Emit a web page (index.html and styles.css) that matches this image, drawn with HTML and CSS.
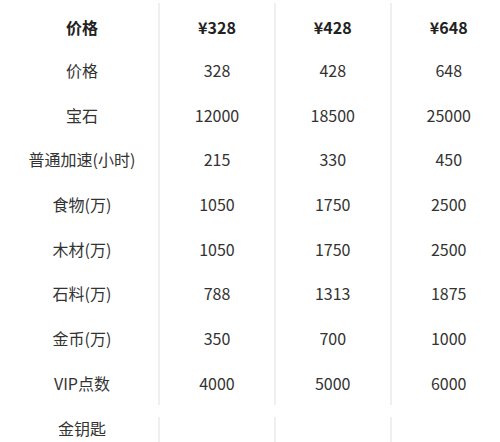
FILE: index.html
```html
<!DOCTYPE html>
<html lang="zh">
<head>
<meta charset="utf-8">
<link rel="stylesheet" href="styles.css">
</head>
<body>
<div class="sheet">
  <div class="table">
    <div class="row head"><div class="cell first">价格</div><div class="cell">¥328</div><div class="cell">¥428</div><div class="cell">¥648</div></div>
    <div class="row"><div class="cell first">价格</div><div class="cell">328</div><div class="cell">428</div><div class="cell">648</div></div>
    <div class="row"><div class="cell first">宝石</div><div class="cell">12000</div><div class="cell">18500</div><div class="cell">25000</div></div>
    <div class="row"><div class="cell first">普通加速(小时)</div><div class="cell">215</div><div class="cell">330</div><div class="cell">450</div></div>
    <div class="row"><div class="cell first">食物(万)</div><div class="cell">1050</div><div class="cell">1750</div><div class="cell">2500</div></div>
    <div class="row"><div class="cell first">木材(万)</div><div class="cell">1050</div><div class="cell">1750</div><div class="cell">2500</div></div>
    <div class="row"><div class="cell first">石料(万)</div><div class="cell">788</div><div class="cell">1313</div><div class="cell">1875</div></div>
    <div class="row"><div class="cell first">金币(万)</div><div class="cell">350</div><div class="cell">700</div><div class="cell">1000</div></div>
    <div class="row"><div class="cell first">VIP点数</div><div class="cell">4000</div><div class="cell">5000</div><div class="cell">6000</div></div>
  </div>
  <div class="table extra">
    <div class="row"><div class="cell first">金钥匙</div><div class="cell"></div><div class="cell"></div><div class="cell"></div></div>
  </div>
</div>
</body>
</html>
```
FILE: styles.css
```css
html, body {
  margin: 0;
  padding: 0;
  background: #ffffff;
  overflow: hidden;
}
body {
  width: 500px;
  height: 442px;
  font-family: "Noto Sans CJK SC", "Noto Sans", sans-serif;
  font-size: 16px;
  color: #333333;
}
.sheet {
  width: 506px;
  padding-top: 3px;
}
.table .row {
  display: grid;
  grid-template-columns: 158px 116px 115.5px 116.5px;
  height: 44.67px;
}
.cell {
  display: flex;
  align-items: center;
  justify-content: center;
  border-left: 2px solid #efefef;
  line-height: 22px;
  white-space: nowrap;
}
.cell.first {
  border-left: none;
  padding-left: 6px;
}
.head .cell {
  font-weight: bold;
  color: #222222;
  padding-top: 3px;
}
.extra {
  margin-top: 12px;
}
.extra .row {
  height: 30px;
}
.extra .cell {
  align-items: flex-start;
}
```
